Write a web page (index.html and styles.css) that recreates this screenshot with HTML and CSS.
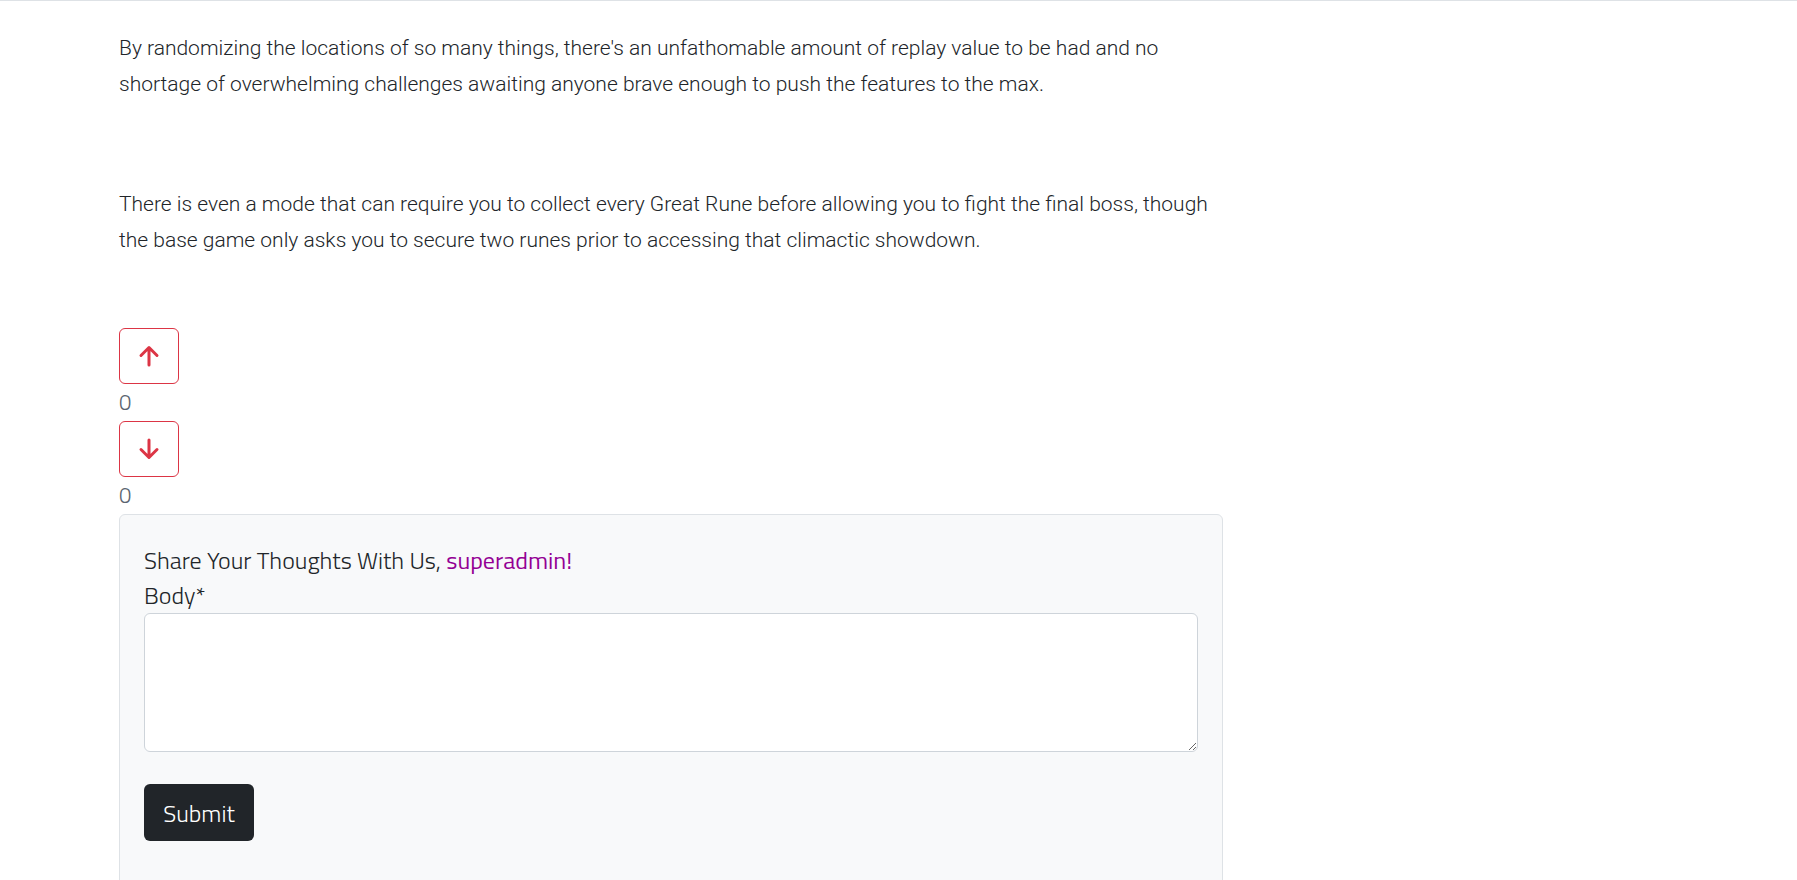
FILE: index.html
```html
<!DOCTYPE html>
<html lang="en">
<head>
<meta charset="utf-8">
<title>Post</title>
<link rel="stylesheet" href="styles.css">
</head>
<body>
<div class="topline"></div>
<main class="column">
  <p class="para">By randomizing the locations of so many things, there's an unfathomable amount of replay value to be had and no shortage of overwhelming challenges awaiting anyone brave enough to push the features to the max.</p>
  <p class="para para-second">There is even a mode that can require you to collect every Great Rune before allowing you to fight the final boss, though the base game only asks you to secure two runes prior to accessing that climactic showdown.</p>
  <div class="votes">
    <button class="vote-btn" type="button" aria-label="Upvote">
      <svg width="24" height="24" viewBox="0 0 24 24"><path d="M12 21V4M4 11.5L12 3.5l8 8" fill="none" stroke="#dc3545" stroke-width="3" stroke-linecap="round" stroke-linejoin="round"/></svg>
    </button>
    <div class="count">0</div>
    <button class="vote-btn" type="button" aria-label="Downvote">
      <svg width="24" height="24" viewBox="0 0 24 24"><path d="M12 3v17M4 12.5l8 8 8-8" fill="none" stroke="#dc3545" stroke-width="3" stroke-linecap="round" stroke-linejoin="round"/></svg>
    </button>
    <div class="count">0</div>
  </div>
  <section class="card">
    <h5 class="card-title">Share Your Thoughts With Us, <span class="user">superadmin!</span></h5>
    <label class="label" for="body">Body*</label>
    <textarea id="body" class="field"></textarea>
    <button class="submit" type="submit">Submit</button>
  </section>
</main>
</body>
</html>
```
FILE: styles.css
```css
html, body { margin: 0; padding: 0; background: #fff; }
body { font-family: "Titillium Web", "Open Sans", sans-serif; color: #212529; }
.topline { height: 1px; background: #dee2e6; }
.column { width: 1104px; margin-left: 119px; padding-top: 29px; }
.para { margin: 0; font-family: Roboto, sans-serif; font-weight: 300; font-size: 21px; line-height: 36px; color: #212529; }
.para-second { margin-top: 84px; }
.votes { margin-top: 70px; display: flex; flex-direction: column; align-items: flex-start; }
.vote-btn { width: 60px; height: 56px; border: 1px solid #dc3545; border-radius: 6px; background: #fff; display: flex; align-items: center; justify-content: center; padding: 0; }
.count { font-size: 22px; font-weight: 300; line-height: 37px; height: 37px; color: #5a6470; }
.card { border: 1px solid #dee2e6; border-radius: 6px; background: #f8f9fa; padding: 28px 24px 120px; display: flex; flex-direction: column; align-items: flex-start; }
.card-title { margin: 0; font-size: 24px; font-weight: 300; line-height: 35px; color: #212529; }
.user { color: #940094; font-weight: 400; }
.label { font-size: 24px; font-weight: 300; line-height: 35px; }
.field { width: 100%; box-sizing: border-box; height: 139px; border: 1px solid #ced4da; border-radius: 6px; background: #fff; margin: 0; }
.submit { margin-top: 32px; width: 110px; height: 57px; background: #212529; color: #fff; border: 0; border-radius: 6px; font-family: inherit; font-size: 24px; font-weight: 300; }
```
